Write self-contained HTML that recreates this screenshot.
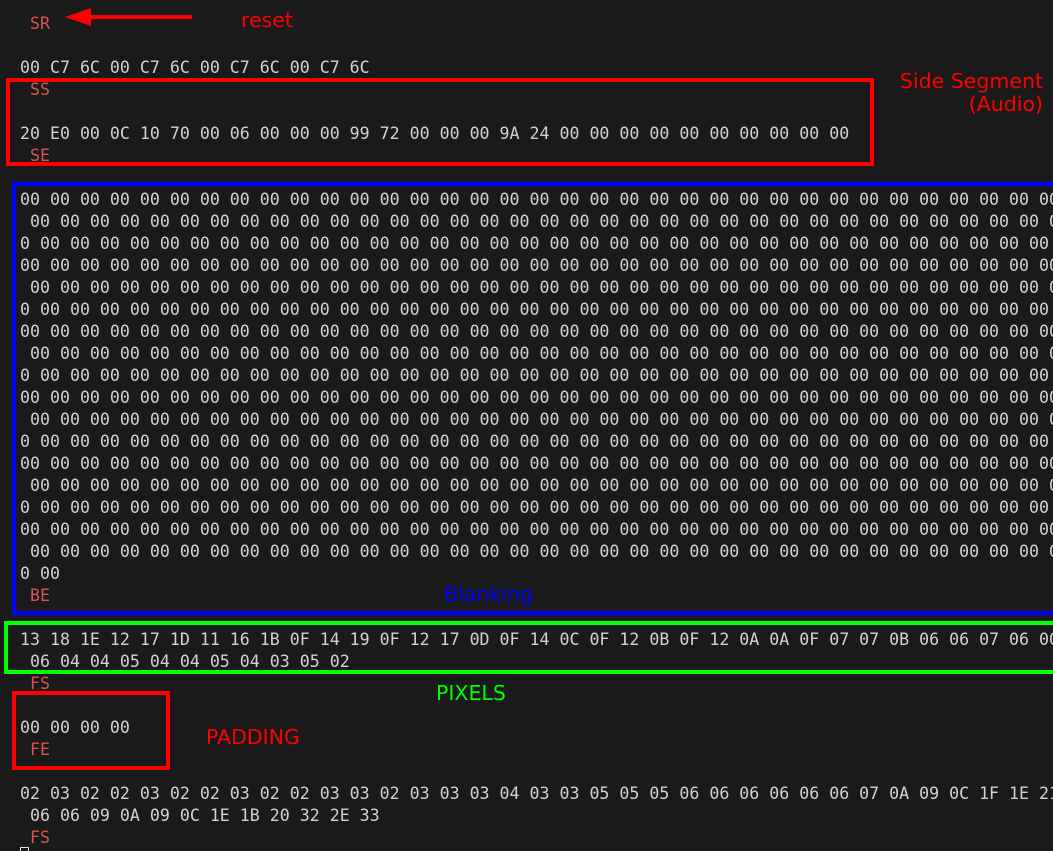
<!DOCTYPE html>
<html><head><style>
html,body{margin:0;padding:0;background:#1a1a1a;width:1053px;height:851px;overflow:hidden;position:relative}
pre{position:absolute;left:20px;top:13px;margin:0;font-family:"DejaVu Sans Mono","Liberation Mono",monospace;font-size:16.6px;line-height:22px;color:#d2d2d2;white-space:pre}
.l{color:#d85555}
.box{position:absolute;box-sizing:border-box;border:4px solid}
.t{position:absolute;font-family:"DejaVu Sans","Liberation Sans",sans-serif;font-size:20.5px;line-height:23px;white-space:nowrap}
.cur{position:absolute;left:20px;top:847px;width:9px;height:8px;border:1px solid #ddd;box-sizing:border-box}
</style></head><body>
<pre><span class="l"> SR</span>

00 C7 6C 00 C7 6C 00 C7 6C 00 C7 6C
<span class="l"> SS</span>

20 E0 00 0C 10 70 00 06 00 00 00 99 72 00 00 00 9A 24 00 00 00 00 00 00 00 00 00 00
<span class="l"> SE</span>

00 00 00 00 00 00 00 00 00 00 00 00 00 00 00 00 00 00 00 00 00 00 00 00 00 00 00 00 00 00 00 00 00 00 00
 00 00 00 00 00 00 00 00 00 00 00 00 00 00 00 00 00 00 00 00 00 00 00 00 00 00 00 00 00 00 00 00 00 00 0
0 00 00 00 00 00 00 00 00 00 00 00 00 00 00 00 00 00 00 00 00 00 00 00 00 00 00 00 00 00 00 00 00 00 00 0
00 00 00 00 00 00 00 00 00 00 00 00 00 00 00 00 00 00 00 00 00 00 00 00 00 00 00 00 00 00 00 00 00 00 00
 00 00 00 00 00 00 00 00 00 00 00 00 00 00 00 00 00 00 00 00 00 00 00 00 00 00 00 00 00 00 00 00 00 00 0
0 00 00 00 00 00 00 00 00 00 00 00 00 00 00 00 00 00 00 00 00 00 00 00 00 00 00 00 00 00 00 00 00 00 00 0
00 00 00 00 00 00 00 00 00 00 00 00 00 00 00 00 00 00 00 00 00 00 00 00 00 00 00 00 00 00 00 00 00 00 00
 00 00 00 00 00 00 00 00 00 00 00 00 00 00 00 00 00 00 00 00 00 00 00 00 00 00 00 00 00 00 00 00 00 00 0
0 00 00 00 00 00 00 00 00 00 00 00 00 00 00 00 00 00 00 00 00 00 00 00 00 00 00 00 00 00 00 00 00 00 00 0
00 00 00 00 00 00 00 00 00 00 00 00 00 00 00 00 00 00 00 00 00 00 00 00 00 00 00 00 00 00 00 00 00 00 00
 00 00 00 00 00 00 00 00 00 00 00 00 00 00 00 00 00 00 00 00 00 00 00 00 00 00 00 00 00 00 00 00 00 00 0
0 00 00 00 00 00 00 00 00 00 00 00 00 00 00 00 00 00 00 00 00 00 00 00 00 00 00 00 00 00 00 00 00 00 00 0
00 00 00 00 00 00 00 00 00 00 00 00 00 00 00 00 00 00 00 00 00 00 00 00 00 00 00 00 00 00 00 00 00 00 00
 00 00 00 00 00 00 00 00 00 00 00 00 00 00 00 00 00 00 00 00 00 00 00 00 00 00 00 00 00 00 00 00 00 00 0
0 00 00 00 00 00 00 00 00 00 00 00 00 00 00 00 00 00 00 00 00 00 00 00 00 00 00 00 00 00 00 00 00 00 00 0
00 00 00 00 00 00 00 00 00 00 00 00 00 00 00 00 00 00 00 00 00 00 00 00 00 00 00 00 00 00 00 00 00 00 00
 00 00 00 00 00 00 00 00 00 00 00 00 00 00 00 00 00 00 00 00 00 00 00 00 00 00 00 00 00 00 00 00 00 00 0
0 00
<span class="l"> BE</span>

13 18 1E 12 17 1D 11 16 1B 0F 14 19 0F 12 17 0D 0F 14 0C 0F 12 0B 0F 12 0A 0A 0F 07 07 0B 06 06 07 06 00
 06 04 04 05 04 04 05 04 03 05 02
<span class="l"> FS</span>

00 00 00 00
<span class="l"> FE</span>

02 03 02 02 03 02 02 03 02 02 03 03 02 03 03 03 04 03 03 05 05 05 06 06 06 06 06 06 07 0A 09 0C 1F 1E 21
 06 06 09 0A 09 0C 1E 1B 20 32 2E 33
<span class="l"> FS</span>
</pre>
<div class="cur"></div>
<div class="box" style="left:6px;top:78px;width:868px;height:88px;border-color:#f00"></div>
<div class="box" style="left:12px;top:182px;width:1050px;height:433px;border-color:#00f"></div>
<div class="box" style="left:4px;top:621px;width:1060px;height:53px;border-color:#0f0"></div>
<div class="box" style="left:12px;top:691px;width:158px;height:79px;border-color:#f00"></div>
<svg style="position:absolute;left:60px;top:6px" width="140" height="24"><line x1="132" y1="11" x2="20" y2="11" stroke="#f00" stroke-width="4"/><polygon points="5,11 31,2 31,20" fill="#f00"/></svg>
<div class="t" style="left:241px;top:9px;color:#f00">reset</div>
<div class="t" style="right:10px;top:70px;color:#f00;text-align:right">Side Segment<br>(Audio)</div>
<div class="t" style="left:444px;top:583px;color:#00f">Blanking</div>
<div class="t" style="left:436px;top:682px;color:#0f0">PIXELS</div>
<div class="t" style="left:206px;top:726px;color:#f00">PADDING</div>
</body></html>
